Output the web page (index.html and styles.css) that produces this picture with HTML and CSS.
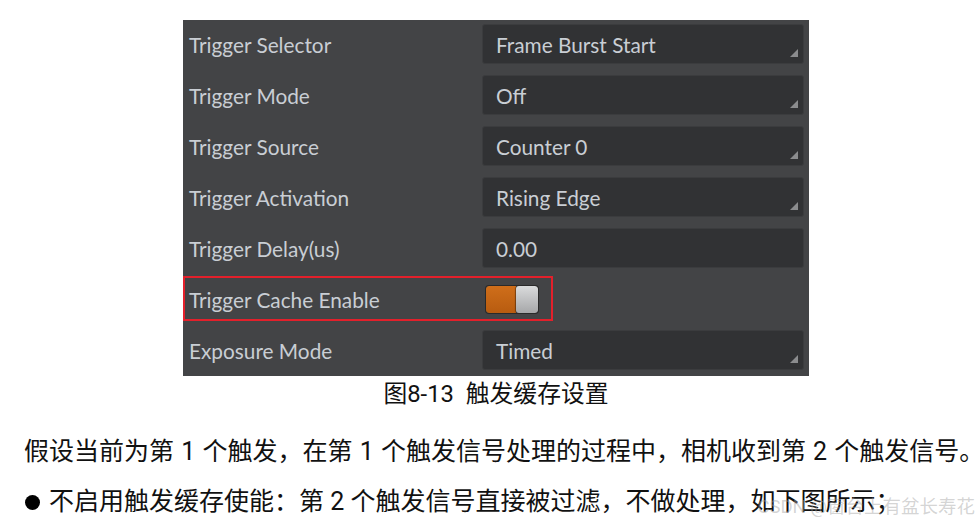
FILE: index.html
```html
<!DOCTYPE html>
<html lang="zh">
<head>
<meta charset="utf-8">
<title>Trigger Cache</title>
<link rel="stylesheet" href="styles.css">
</head>
<body>
<div class="figure">
  <div class="panel">
    <div class="row"><span class="label">Trigger Selector</span><div class="box select">Frame Burst Start</div></div>
    <div class="row"><span class="label">Trigger Mode</span><div class="box select">Off</div></div>
    <div class="row"><span class="label">Trigger Source</span><div class="box select">Counter 0</div></div>
    <div class="row"><span class="label">Trigger Activation</span><div class="box select">Rising Edge</div></div>
    <div class="row"><span class="label">Trigger Delay(us)</span><div class="box">0.00</div></div>
    <div class="row"><span class="label">Trigger Cache Enable</span><div class="toggle-cell"><span class="toggle"><span class="on"></span><span class="knob"></span></span></div></div>
    <div class="row"><span class="label">Exposure Mode</span><div class="box select">Timed</div></div>
    <div class="highlight"></div>
  </div>
  <div class="caption">图8-13&nbsp;&nbsp;触发缓存设置</div>
</div>
<p class="para">假设当前为第 1 个触发，在第 1 个触发信号处理的过程中，相机收到第 2 个触发信号。</p>
<div class="bullet-line">
  <span class="dot"></span>
  <span class="btext">不启用触发缓存使能：第 2 个触发信号直接被过滤，不做处理，如下图所示；</span>
  <span class="watermark">CSDN @窗台上有盆长寿花</span>
</div>
</body>
</html>
```

FILE: styles.css
```css
html, body {
  margin: 0;
  padding: 0;
  background: #ffffff;
}
body {
  width: 979px;
  height: 524px;
  overflow: hidden;
  font-family: Roboto, "Noto Sans CJK SC", sans-serif;
  color: #111111;
}
.figure {
  padding-top: 20px;
  padding-left: 183px;
}
.panel {
  position: relative;
  width: 626px;
  height: 356px;
  box-sizing: border-box;
  background: #434446;
  padding: 4px 5px 6px 6px;
  display: grid;
  grid-template-rows: repeat(7, 40px);
  row-gap: 11px;
  font-family: Lato, "Open Sans", sans-serif;
  font-size: 20.8px;
  color: #c9ced4;
}
.row {
  display: grid;
  grid-template-columns: 293px 322px;
  align-items: center;
}
.label {
  white-space: nowrap;
  padding-top: 1px;
}
.box {
  position: relative;
  height: 40px;
  box-sizing: border-box;
  background: #313234;
  border: 1px solid #3b3c3e;
  border-radius: 3px;
  padding-left: 13px;
  line-height: 39px;
}
.select::after {
  content: "";
  position: absolute;
  right: 5px;
  bottom: 6px;
  width: 0;
  height: 0;
  border-left: 8px solid transparent;
  border-bottom: 8px solid #8b8c8e;
}
.toggle-cell {
  display: flex;
  align-items: center;
  height: 40px;
  padding-left: 4px;
}
.toggle {
  display: flex;
  width: 52px;
  height: 27px;
  border-radius: 3px;
  box-shadow: 0 0 0 1px #2a2a2a;
  overflow: hidden;
}
.on {
  width: 30px;
  background: linear-gradient(#cf6e1a, #b85c10);
  border-radius: 3px 0 0 3px;
}
.knob {
  width: 22px;
  background: linear-gradient(#dadbdc, #a6a7a9);
  border-radius: 3px;
  box-shadow: -1px 0 1px rgba(0,0,0,0.4);
}
.highlight {
  position: absolute;
  left: 0;
  top: 256px;
  width: 370px;
  height: 45px;
  box-sizing: border-box;
  border: 2px solid #e3202b;
}
.caption {
  width: 626px;
  text-align: center;
  font-size: 23.8px;
  line-height: 36px;
  color: #111;
}
.para {
  margin: 23px 0 0 24px;
  font-size: 25px;
  line-height: 34px;
  word-spacing: 1px;
  white-space: nowrap;
}
.bullet-line {
  position: relative;
  display: flex;
  align-items: center;
  margin-top: 16px;
  padding-left: 25px;
  font-size: 25px;
  line-height: 34px;
  white-space: nowrap;
}
.dot {
  width: 15px;
  height: 15px;
  border-radius: 50%;
  background: #000;
  margin-right: 9px;
}
.watermark {
  position: absolute;
  right: 4px;
  top: 5px;
  font-size: 18.5px;
  color: rgba(160,160,160,0.45);
}
```
